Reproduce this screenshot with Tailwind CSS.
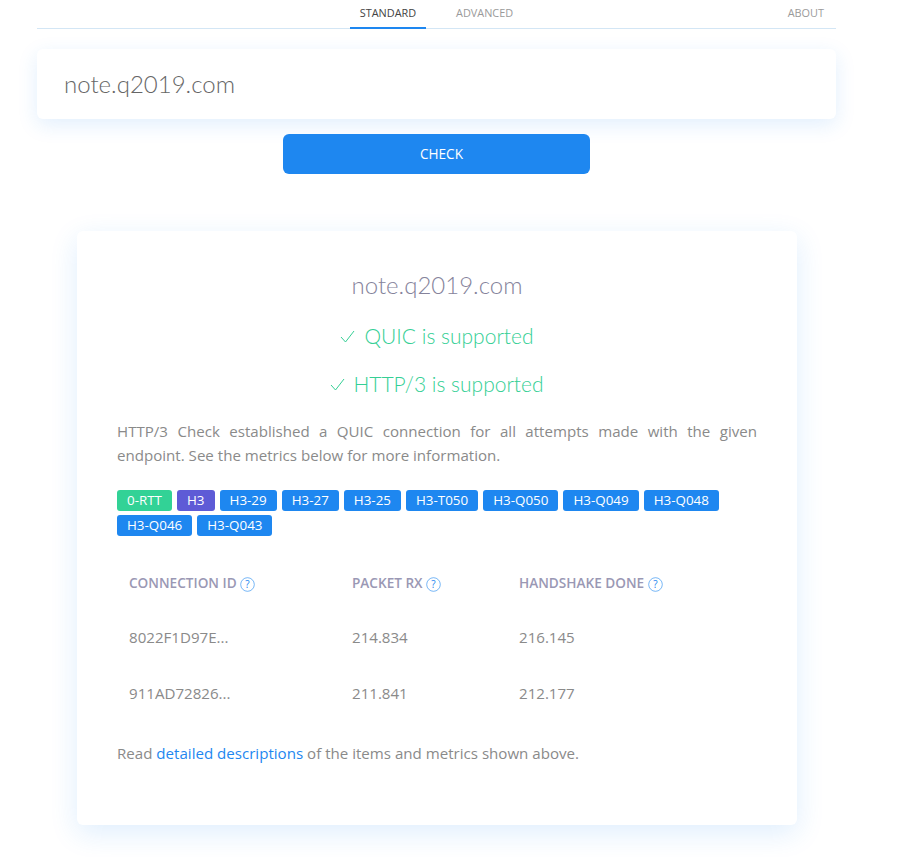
<!DOCTYPE html>
<html lang="en">
  <head>
    <title>HTTP/3 Check</title>
    <meta charset="UTF-8" />
    <script src="https://cdn.jsdelivr.net/npm/@tailwindcss/browser@4"></script>
  </head>

  <body class="bg-white h-[857px] overflow-hidden font-['Open_Sans',sans-serif] text-[#8a8a8a]">
    <div class="w-[799px] ml-[37px]">
      <nav class="flex h-[29px] border-b border-[#d3e6f5] text-[10.9px] pl-[313px]">
        <a class="w-[76px] h-[29px] border-b-2 border-[#1e87f0] text-center pt-[5px] text-[#444]">STANDARD</a>
        <a class="ml-[30px] pt-[5px] text-[#9a9a9a]">ADVANCED</a>
        <a class="ml-auto mr-[12px] pt-[5px] text-[#9a9a9a]">ABOUT</a>
      </nav>

      <div class="mt-[20px] h-[70px] flex items-center pl-[27px] bg-white rounded-md shadow-[0_6px_20px_rgba(30,135,240,0.13)] font-['Lato',sans-serif] font-light text-[24px] text-[#666]">
        note.q2019.com
      </div>

      <button class="block mt-[15px] ml-[246px] w-[307px] h-[40px] pl-[10px] pt-[1px] rounded-md bg-[#1e87f0] text-white text-[13.6px]">
        CHECK
      </button>
    </div>

    <main class="mt-[57px] ml-[77px] w-[720px] h-[594px] bg-white rounded-md shadow-[0_8px_28px_rgba(30,135,240,0.14)] px-[40px] pt-[36px]">
      <h2 class="text-center font-['Lato',sans-serif] font-light text-[24px] leading-[36px] text-[#85839b]">note.q2019.com</h2>
      <p class="mt-[17px] flex items-center justify-center gap-[9px] font-['Lato',sans-serif] font-light text-[21px] leading-[32px] text-[#35cf95]">
        <svg class="w-[15px] h-[13px]" viewBox="0 0 15 13" fill="none" stroke="#35cf95"><path d="M1 7l4.5 5L14 1" /></svg>
        QUIC is supported
      </p>
      <p class="mt-[16px] flex items-center justify-center gap-[8px] font-['Lato',sans-serif] font-light text-[21px] leading-[32px] text-[#35cf95]">
        <svg class="w-[15px] h-[13px]" viewBox="0 0 15 13" fill="none" stroke="#35cf95"><path d="M1 7l4.5 5L14 1" /></svg>
        HTTP/3 is supported
      </p>

      <p class="mt-[19px] text-[15.1px] leading-[24px] text-justify text-[#8a8a8a]">
        HTTP/3 Check established a QUIC connection for all attempts made with the given endpoint. See the metrics below for more information.
      </p>

      <div class="mt-[23px] flex flex-wrap gap-x-[5px] gap-y-[4px] text-[13.4px] leading-[21px] text-white">
        <span class="px-[10px] rounded-[3px] bg-[#32d296]">0-RTT</span>
        <span class="px-[10px] rounded-[3px] bg-[#5e5bd6]">H3</span>
        <span class="px-[10px] rounded-[3px] bg-[#1e87f0]">H3-29</span>
        <span class="px-[10px] rounded-[3px] bg-[#1e87f0]">H3-27</span>
        <span class="px-[10px] rounded-[3px] bg-[#1e87f0]">H3-25</span>
        <span class="px-[10px] rounded-[3px] bg-[#1e87f0]">H3-T050</span>
        <span class="px-[10px] rounded-[3px] bg-[#1e87f0]">H3-Q050</span>
        <span class="px-[10px] rounded-[3px] bg-[#1e87f0]">H3-Q049</span>
        <span class="px-[10px] rounded-[3px] bg-[#1e87f0]">H3-Q048</span>
        <span class="px-[10px] rounded-[3px] bg-[#1e87f0]">H3-Q046</span>
        <span class="px-[10px] rounded-[3px] bg-[#1e87f0]">H3-Q043</span>
      </div>

      <table class="mt-[21px] text-left text-[15.1px] text-[#8a8a8a]">
        <thead class="text-[13.6px] font-semibold text-[#9a98b4]">
          <tr class="h-[52px]">
            <th class="w-[223px] pl-[12px] font-semibold">CONNECTION ID
              <svg class="inline-block w-[15px] h-[15px] align-[-4px]" viewBox="0 0 15 15" fill="none">
                <circle cx="7.5" cy="7.5" r="6.8" stroke="#1e87f0" stroke-opacity="0.6" />
                <text x="7.5" y="11" text-anchor="middle" font-size="10" font-weight="400" fill="#1e87f0">?</text>
              </svg>
            </th>
            <th class="w-[167px] pl-[12px] font-semibold">PACKET RX
              <svg class="inline-block w-[15px] h-[15px] align-[-4px]" viewBox="0 0 15 15" fill="none">
                <circle cx="7.5" cy="7.5" r="6.8" stroke="#1e87f0" stroke-opacity="0.6" />
                <text x="7.5" y="11" text-anchor="middle" font-size="10" font-weight="400" fill="#1e87f0">?</text>
              </svg>
            </th>
            <th class="pl-[12px] font-semibold">HANDSHAKE DONE
              <svg class="inline-block w-[15px] h-[15px] align-[-4px]" viewBox="0 0 15 15" fill="none">
                <circle cx="7.5" cy="7.5" r="6.8" stroke="#1e87f0" stroke-opacity="0.6" />
                <text x="7.5" y="11" text-anchor="middle" font-size="10" font-weight="400" fill="#1e87f0">?</text>
              </svg>
            </th>
          </tr>
        </thead>
        <tbody>
          <tr class="h-[56px]">
            <td class="pl-[12px]">8022F1D97E...</td>
            <td class="pl-[12px]">214.834</td>
            <td class="pl-[12px]">216.145</td>
          </tr>
          <tr class="h-[56px]">
            <td class="pl-[12px]">911AD72826...</td>
            <td class="pl-[12px]">211.841</td>
            <td class="pl-[12px]">212.177</td>
          </tr>
        </tbody>
      </table>

      <p class="mt-[20px] text-[15.1px] leading-[24px]">
        Read <a class="text-[#1e87f0]">detailed descriptions</a> of the items and metrics shown above.
      </p>
    </main>
  </body>
</html>
